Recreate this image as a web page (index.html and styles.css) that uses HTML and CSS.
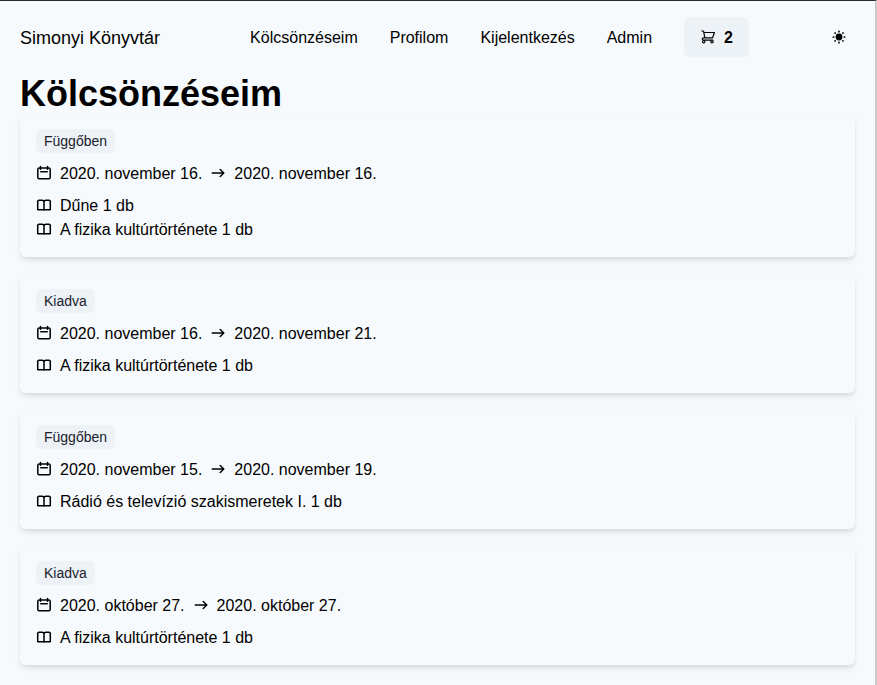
FILE: index.html
```html
<!DOCTYPE html>
<html lang="hu">
<head>
<meta charset="utf-8">
<meta name="viewport" content="width=device-width, initial-scale=1">
<title>Kölcsönzéseim</title>
<link rel="stylesheet" href="styles.css">
</head>
<body>
<svg class="sprite" aria-hidden="true">
  <symbol id="calendar" viewBox="0 0 16 16">
    <rect x="1.800" y="3.100" width="12.400" height="10.700" rx="1.500"/>
    <path d="M4.500 1.500v2.700M11.500 1.500v2.700M4.700 6.700h6.600"/>
  </symbol>
  <symbol id="book" viewBox="0 0 16 16">
    <path d="M8 5v8M1.700 12.700V4.500Q1.700 3.300 3 3.300H6Q8 3.300 8 5.300Q8 3.300 10 3.300h3Q14.300 3.300 14.300 4.500V12.700H9.500Q8.300 12.700 8 13.200Q7.700 12.700 6.500 12.700Z"/>
  </symbol>
  <symbol id="arrow" viewBox="0 0 16 16">
    <path d="M2.300 8H13.700M10.200 4.500L13.800 8l-3.600 3.500"/>
  </symbol>
  <symbol id="cart" viewBox="0 0 16 16">
    <path class="thin" d="M1.700 2H3.500L4.900 8.800H12.600L14.400 3.500H3.800M4.900 8.800H3.500Q2.300 8.800 2.300 10T3.500 11.200H12.800"/>
    <circle class="thin" cx="3.700" cy="12.700" r="1.200"/><circle class="thin" cx="12" cy="12.700" r="1.200"/>
  </symbol>
  <symbol id="sun" viewBox="0 0 16 16">
    <circle class="disc" cx="8" cy="8" r="3.400"/>
    <path class="rays" d="M8 2.300v.4M8 13.300v.4M2.300 8h.4M13.300 8h.4M4 4l.2.200M11.800 11.800l.2.200M4 12l.2-.2M11.800 4.200l.2-.2"/>
  </symbol>
</svg>
<div class="page">
  <header class="header">
    <a class="brand" href="#">Simonyi Könyvtár</a>
    <nav class="nav">
      <a href="#">Kölcsönzéseim</a>
      <a href="#">Profilom</a>
      <a href="#">Kijelentkezés</a>
      <a href="#">Admin</a>
      <button class="cart" type="button" aria-label="Kosár, 2"><svg class="icon"><use href="#cart"/></svg>2</button>
    </nav>
    <button class="theme" type="button" aria-label="Téma"><svg class="icon"><use href="#sun"/></svg></button>
  </header>
  <main>
    <h1>Kölcsönzéseim</h1>
    <div class="orders">
      <article class="card">
        <span class="badge">Függőben</span>
        <p class="row"><svg class="icon"><use href="#calendar"/></svg>2020. november 16.<svg class="icon"><use href="#arrow"/></svg>2020. november 16.</p>
        <ul>
          <li class="row"><svg class="icon"><use href="#book"/></svg>Dűne 1 db</li>
          <li class="row"><svg class="icon"><use href="#book"/></svg>A fizika kultúrtörténete 1 db</li>
        </ul>
      </article>
      <article class="card">
        <span class="badge">Kiadva</span>
        <p class="row"><svg class="icon"><use href="#calendar"/></svg>2020. november 16.<svg class="icon"><use href="#arrow"/></svg>2020. november 21.</p>
        <ul>
          <li class="row"><svg class="icon"><use href="#book"/></svg>A fizika kultúrtörténete 1 db</li>
        </ul>
      </article>
      <article class="card">
        <span class="badge">Függőben</span>
        <p class="row"><svg class="icon"><use href="#calendar"/></svg>2020. november 15.<svg class="icon"><use href="#arrow"/></svg>2020. november 19.</p>
        <ul>
          <li class="row"><svg class="icon"><use href="#book"/></svg>Rádió és televízió szakismeretek I. 1 db</li>
        </ul>
      </article>
      <article class="card">
        <span class="badge">Kiadva</span>
        <p class="row"><svg class="icon"><use href="#calendar"/></svg>2020. október 27.<svg class="icon"><use href="#arrow"/></svg>2020. október 27.</p>
        <ul>
          <li class="row"><svg class="icon"><use href="#book"/></svg>A fizika kultúrtörténete 1 db</li>
        </ul>
      </article>
    </div>
  </main>
</div>
</body>
</html>
```
FILE: styles.css
```css
* { box-sizing: border-box; margin: 0; padding: 0; }

body {
  background: #f7fafc;
  color: #000;
  font: 16px/24px "Liberation Sans", Arial, sans-serif;
}

a { color: inherit; text-decoration: none; }
ul { list-style: none; }
button { border: 0; font: inherit; color: inherit; cursor: pointer; }

.sprite { position: absolute; width: 0; height: 0; }

.icon {
  flex: none;
  width: 16px;
  height: 16px;
  fill: none;
  stroke: currentColor;
  stroke-width: 1.5;
  stroke-linecap: round;
  stroke-linejoin: round;
}

.disc { fill: currentColor; stroke: none; }
.thin { stroke-width: 1.2; }
.rays { stroke-width: 1.7; }

.page {
  min-height: 100vh;
  padding: 0 20px 20px;
  border-top: 1px solid #2a2a38;
  border-right: 2px solid #cbc8c6;
}

.header {
  display: flex;
  align-items: center;
  justify-content: space-between;
  padding: 16px 0;
}

.brand { margin-right: 16px; padding-top: 2px; font-size: 18px; }

.nav { display: flex; align-items: center; }
.nav a { padding: 2px 16px 0; }

.cart {
  display: flex;
  align-items: center;
  gap: 8px;
  height: 40px;
  margin: 0 16px;
  padding: 2px 16px 0;
  border-radius: 6px;
  background: #edf2f7;
  font-weight: 700;
}

.theme {
  display: flex;
  align-items: center;
  justify-content: center;
  width: 32px;
  height: 32px;
  background: none;
}

h1 { padding-top: 2px; font-size: 36px; line-height: 38px; }

.orders { display: grid; gap: 16px; }

.card {
  display: flex;
  flex-direction: column;
  align-items: flex-start;
  gap: 8px;
  padding: 16px;
  border-radius: 6px;
  background: #f7fafc;
  box-shadow: 0 4px 6px -1px rgba(0, 0, 0, 0.1), 0 2px 4px -1px rgba(0, 0, 0, 0.06);
}

.badge {
  padding: 0 8px;
  border-radius: 6px;
  background: #edf2f7;
  color: #1a202c;
  font-size: 14px;
}

.row {
  display: flex;
  align-items: center;
  gap: 8px;
  padding-top: 2px;
  line-height: 22px;
}

/* Icons stay centred in the box while the text sits on its lowered baseline */
.row .icon,
.cart .icon { margin-bottom: 2px; }
```
